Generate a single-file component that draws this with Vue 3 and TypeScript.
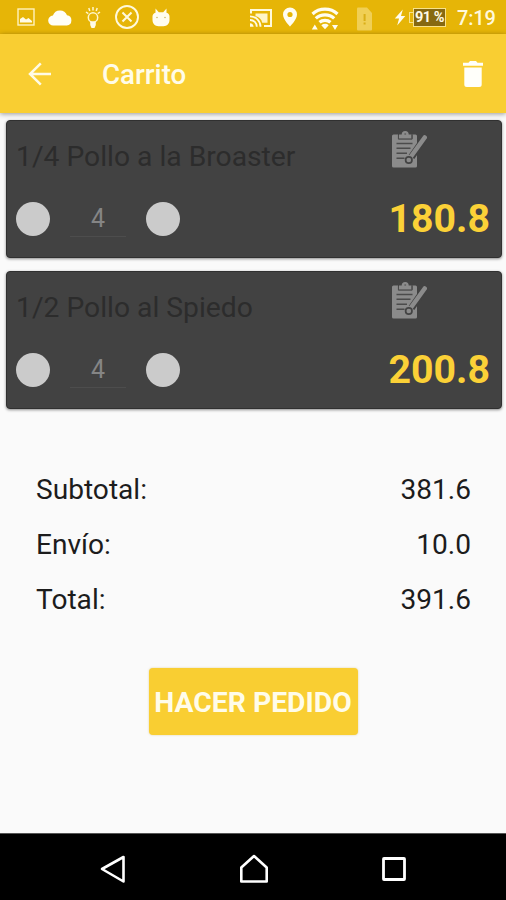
<script setup lang="ts">
interface CartItem {
  id: number
  name: string
  quantity: number
  price: string
}

interface SummaryRow {
  label: string
  amount: string
}

const items: CartItem[] = [
  { id: 1, name: '1/4 Pollo a la Broaster', quantity: 4, price: '180.8' },
  { id: 2, name: '1/2 Pollo al Spiedo', quantity: 4, price: '200.8' },
]

const summary: SummaryRow[] = [
  { label: 'Subtotal:', amount: '381.6' },
  { label: 'Envío:', amount: '10.0' },
  { label: 'Total:', amount: '391.6' },
]
</script>

<template>
  <div class="screen">
    <header class="status">
      <div class="status-group">
        <svg class="picture" width="18" height="18" viewBox="0 0 18 18">
          <rect x="1" y="1" width="16" height="16" fill="none" stroke="#fff3bd" stroke-width="1.4" />
          <path d="M3 14.500V11l3-2 3 2.500 2.500-1.500 3.500 3v1.500z" fill="#fffbe6" />
        </svg>
        <svg class="cloud" width="24" height="17" viewBox="0 0 24 17">
          <path d="M5.500 16.500a5 5 0 0 1-.6-10A7.500 7.500 0 0 1 19 6.200a5.200 5.200 0 0 1-.2 10.300z" fill="#fffef6" />
        </svg>
        <svg class="bulb" width="16" height="23" viewBox="0 0 16 23">
          <g fill="none" stroke="#fff6cb" stroke-width="1.500">
            <circle cx="8" cy="11.500" r="4.700" />
            <path d="M8 1v3.500M3.800 2l1 3M12.200 2l-1 3M1 6l2.300 1.700M15 6l-2.300 1.700" />
          </g>
          <path d="M5.200 15.500h5.600v3.500L9.500 22h-3l-1.300-3z" fill="#fffbe6" />
        </svg>
        <svg class="cancel" width="26" height="26" viewBox="0 0 26 26">
          <g fill="none" stroke="#fff9dc" stroke-width="1.900">
            <circle cx="13" cy="13" r="11" />
            <path d="M8.500 8.500l9 9M17.500 8.500l-9 9" stroke-width="2.100" />
          </g>
        </svg>
        <svg class="cat" width="18" height="19" viewBox="0 0 18 19">
          <path d="M3.500.5L6.800 4.200h4.400L14.500.5v4.300c2 .7 3 1.800 3 3.700v3.500c0 3.700-2.500 6.200-6 6.200h-5c-3.500 0-6-2.500-6-6.200V8.500c0-1.900 1-3 3-3.700z" fill="#fffdf0" />
          <circle cx="5" cy="9.500" r=".8" fill="#cdb765" />
          <circle cx="13" cy="9.500" r=".8" fill="#cdb765" />
        </svg>
      </div>
      <div class="status-group">
        <svg class="cast" width="24" height="20" viewBox="0 0 24 20">
          <path d="M2 5.500V2h20v16h-7" fill="none" stroke="#fff9dc" stroke-width="2" />
          <path d="M6.500 5.500h12v9.300h-5.300c-.6-3.300-3.200-5.900-6.700-6.700z" fill="#fff5c8" />
          <path d="M1 8.300c5.900 0 10.500 4.600 10.500 10.500M1 12c3.900 0 6.800 2.900 6.800 6.800" fill="none" stroke="#fffbe6" stroke-width="1.800" />
          <path d="M1 15.200c2.100 0 3.600 1.500 3.600 3.600H1z" fill="#fffbe6" />
        </svg>
        <svg class="pin" width="16" height="20" viewBox="0 0 16 20">
          <path d="M8 .5a7 7 0 0 0-7 7C1 12.500 8 19.500 8 19.500s7-7 7-12a7 7 0 0 0-7-7zm0 4.400a2.600 2.600 0 1 1 0 5.200 2.600 2.600 0 0 1 0-5.200z" fill="#fffdf0" />
        </svg>
        <svg class="wifi" width="28" height="24" viewBox="0 0 28 24">
          <g fill="none" stroke="#fffdf0" stroke-width="3.200">
            <path d="M1.500 7C8.300.5 19.700.5 26.500 7" />
            <path d="M4.800 11.300c5-4.700 13.400-4.700 18.400 0" />
            <path d="M8.500 15.300c3-2.700 8-2.700 11 0" />
          </g>
          <path d="M10.300 18.200c2.200-1.900 5.200-1.900 7.400 0L14 22.300zM.8 22.500l3-5 3 5zM21 18h6l-3 5z" fill="#fffdf0" />
        </svg>
        <svg class="sim" width="17" height="24" viewBox="0 0 17 24">
          <path d="M1 1.500q0-1 1-1h9l5 5.500v16.500q0 1-1 1H2q-1 0-1-1z" fill="#f0cf55" />
          <path d="M7.600 7h2v7h-2zM7.600 15.600h2v2h-2z" fill="#d9ae17" />
        </svg>
        <svg class="bolt" width="12" height="17" viewBox="0 0 12 17">
          <path d="M8.800.5L.8 9.500h4.300L3.200 16.500 11.300 7H7z" fill="#fffdf0" />
        </svg>
        <span class="battery"><span class="charge">91 %</span></span>
        <span class="clock">7:19</span>
      </div>
    </header>

    <nav class="toolbar">
      <svg class="back" width="24" height="24" viewBox="0 0 24 24">
        <path d="M12.800 1.300L2 12l10.800 10.700M2.200 12H23" fill="none" stroke="#fffbe6" stroke-width="2.500" />
      </svg>
      <h1 class="title">Carrito</h1>
      <svg class="trash" width="22" height="28" viewBox="0 0 22 28">
        <path d="M1 2.800h5.500L8 1h6l1.500 1.800H21v2.900H1zM2.300 7.500h17.400v17q0 2.500-2.500 2.500H4.800q-2.500 0-2.500-2.500z" fill="#fffffa" />
      </svg>
    </nav>

    <main class="content">
      <article v-for="item in items" :key="item.id" class="card">
        <div class="card-top">
          <h2 class="name">{{ item.name }}</h2>
          <svg class="note" width="36" height="39" viewBox="0 0 36 39">
            <path d="M2.500 4.500H7v4.300h14.500V4.500h3q1.500 0 1.500 1.500v30q0 1.500-1.500 1.500h-22Q1 37.500 1 36V6q0-1.500 1.500-1.500z" fill="#8b8b8b" />
            <path d="M8 8.500V4.500h2.700a3.500 3.500 0 0 1 7 0h2.800v4z" fill="#8b8b8b" />
            <circle cx="14.200" cy="4" r="1" fill="#666" />
            <path d="M7.400 5v4.200h13.700V5" fill="none" stroke="#4b4b4b" stroke-width="1" />
            <path d="M5.500 13.500h16M5.500 18.300h14M5.500 23.300h10.500M5.500 28.200h8" stroke="#4b4b4b" stroke-width="1.600" />
            <path d="M34 7.500L20.500 27" stroke="#424242" stroke-width="6.800" />
            <path d="M33.700 7.500L20 26.500" stroke="#8b8b8b" stroke-width="4.500" stroke-linecap="round" />
            <circle cx="17.800" cy="30" r="3.200" fill="#8b8b8b" stroke="#444" stroke-width="1.700" />
          </svg>
        </div>
        <div class="card-bottom">
          <button class="step" aria-label="Menos"></button>
          <span class="quantity">{{ item.quantity }}</span>
          <button class="step" aria-label="Más"></button>
          <strong class="price">{{ item.price }}</strong>
        </div>
      </article>

      <dl class="summary">
        <div v-for="row in summary" :key="row.label" class="summary-row">
          <dt>{{ row.label }}</dt>
          <dd>{{ row.amount }}</dd>
        </div>
      </dl>

      <button class="order">HACER PEDIDO</button>
    </main>

    <footer class="navbar">
      <svg width="28" height="30" viewBox="0 0 28 30">
        <path d="M3 15L24.500 3v24.500z" fill="none" stroke="#fff" stroke-width="2.600" stroke-linejoin="round" />
      </svg>
      <svg width="30" height="30" viewBox="0 0 30 30">
        <path d="M2.300 13.500L15 2l12.700 11.500v14H2.300z" fill="none" stroke="#fff" stroke-width="2.600" stroke-linejoin="round" />
      </svg>
      <svg width="26" height="26" viewBox="0 0 26 26">
        <rect x="2.500" y="2.500" width="21" height="21" rx=".5" fill="none" stroke="#fff" stroke-width="2.800" />
      </svg>
    </footer>
  </div>
</template>

<style>
body {
  margin: 0;
}
</style>

<style scoped>
.screen {
  display: flex;
  flex-direction: column;
  width: 506px;
  height: 900px;
  overflow: hidden;
  background: #fafafa;
  color: #1c1c1c;
  font-family: Roboto, "Liberation Sans", sans-serif;
}

svg {
  display: block;
  flex: none;
}

h1,
h2,
dl,
dd {
  margin: 0;
}

button {
  padding: 0;
  border: 0;
  font-family: inherit;
}

.status {
  display: flex;
  flex: none;
  justify-content: space-between;
  box-sizing: border-box;
  height: 34px;
  padding: 0 10px 0 17px;
  background: #e6b507;
}

.status-group {
  display: flex;
  align-items: center;
}

.cloud {
  margin-left: 13px;
}

.bulb {
  margin-left: 13px;
}

.cancel {
  margin-left: 13px;
}

.cat {
  margin-left: 12px;
}

.cast {
  margin-top: 2px;
}

.pin {
  margin-left: 9px;
}

.wifi {
  margin: 4px 0 0 13px;
}

.sim {
  margin: 3px 0 0 17px;
}

.bolt {
  margin-left: 21px;
}

.battery {
  display: flex;
  align-items: center;
  margin: 1px 0 0 3px;
}

.battery::before {
  width: 3px;
  height: 9px;
  border: 1px solid #f8e28b;
  border-right: 0;
  content: "";
}

.charge {
  box-sizing: border-box;
  width: 33px;
  height: 19px;
  border: 1px solid #f8e28b;
  background: #866911;
  color: #fffbe6;
  font-size: 14.5px;
  font-weight: 700;
  line-height: 17px;
  text-align: center;
  white-space: nowrap;
  letter-spacing: -0.5px;
}

.clock {
  width: 39px;
  margin: 2px 0 0 11px;
  color: #fff9dc;
  font-size: 20px;
  font-weight: 500;
  line-height: 24px;
  letter-spacing: -0.2px;
}

.toolbar {
  display: flex;
  flex: none;
  align-items: center;
  box-sizing: border-box;
  height: 79px;
  padding: 0 22px 0 28px;
  background: #f9ce32;
  box-shadow: 0 1px 5px rgba(0, 0, 0, 0.4);
}

.title {
  margin: 3px 0 0 50px;
  color: #fffce9;
  font-size: 27.7px;
  font-weight: 500;
  line-height: 34px;
}

.trash {
  margin-left: auto;
}

.content {
  display: flex;
  flex: 1;
  flex-direction: column;
  min-height: 0;
  padding: 7px 4px 0 6px;
}

.card {
  box-sizing: border-box;
  height: 138px;
  margin-bottom: 13px;
  padding: 9px 11px 0 10px;
  border: 1px solid #303030;
  border-radius: 4px;
  background: #424242;
  box-shadow: 0 1px 3px rgba(0, 0, 0, 0.45);
}

.card-top {
  display: flex;
  justify-content: space-between;
  height: 56px;
}

.name {
  margin-left: -1px;
  padding-top: 10px;
  color: #2c2c2c;
  font-size: 28.25px;
  font-weight: 400;
  line-height: 33px;
  white-space: nowrap;
}

.note {
  margin-right: 63px;
}

.card-bottom {
  display: flex;
  align-items: center;
  height: 66px;
}

.step {
  width: 34px;
  height: 34px;
  margin-left: -1px;
  border-radius: 50%;
  background: #cbcbcb;
}

.quantity {
  box-sizing: border-box;
  width: 56px;
  height: 36px;
  margin: 0 21px 0 20px;
  border-bottom: 1px solid #4d4d4d;
  color: #858585;
  font-size: 25px;
  line-height: 36px;
  text-align: center;
}

.price {
  margin-left: auto;
  color: #fbd137;
  font-size: 39.3px;
  font-weight: 700;
  line-height: 50px;
}

.summary {
  display: flex;
  flex-direction: column;
  padding: 40px 31px 0 30px;
}

.summary-row {
  display: flex;
  justify-content: space-between;
  height: 55px;
  font-size: 28.1px;
  line-height: 55px;
}

.order {
  align-self: center;
  width: 209px;
  height: 67px;
  margin: 41px 2px 0 0;
  padding-top: 2px;
  border-radius: 4px;
  background: #f9ce32;
  box-shadow: 0 0 2px rgba(200, 170, 60, 0.5);
  color: #fffce9;
  font-size: 28.3px;
  font-weight: 700;
  white-space: nowrap;
}

.navbar {
  display: flex;
  flex: none;
  align-items: center;
  justify-content: space-between;
  box-sizing: border-box;
  height: 67px;
  padding: 4px 99px 0;
  border-top: 1px solid #555;
  background: #000;
}
</style>
